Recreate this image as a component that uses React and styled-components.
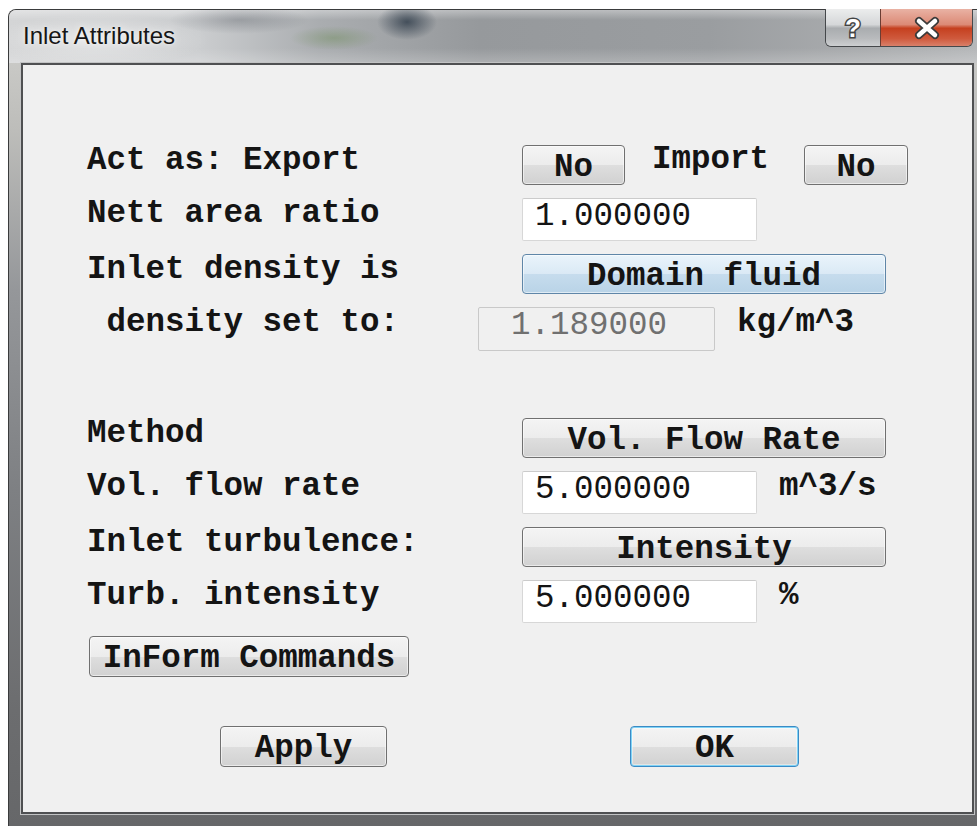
import styled, { createGlobalStyle } from "styled-components";

const GlobalStyle = createGlobalStyle`
  html, body {
    margin: 0;
    padding: 0;
    background: #fff;
    overflow: hidden;
  }
  body {
    font-family: "Liberation Mono", "Courier New", monospace;
  }
`;

const Page = styled.div`
  width: 977px;
  height: 826px;
  box-sizing: border-box;
  padding: 9px 0 0 8px;
  overflow: hidden;
`;

const Window = styled.div`
  width: 979px;
  height: 817px;
  box-sizing: border-box;
  display: flex;
  flex-direction: column;
  border: 1px solid #3a3b3c;
  border-bottom: none;
  border-radius: 8px 8px 0 0;
  padding: 0 12px 12px;
  background: linear-gradient(
    to bottom,
    #d2d2cf 0,
    #bdbdba 120px,
    #95979a 280px,
    #7e8083 480px,
    #6c6d6f 700px,
    #666769 100%
  );
`;

const TitleBar = styled.div`
  flex-shrink: 0;
  height: 53px;
  margin: 0 -12px;
  padding: 0 13px 0 14px;
  display: flex;
  align-items: flex-start;
  border-radius: 7px 7px 0 0;
  background:
    radial-gradient(30px 18px at 398px 12px, rgba(45, 58, 72, 0.8), rgba(45, 58, 72, 0)),
    radial-gradient(44px 12px at 325px 28px, rgba(110, 140, 90, 0.45), rgba(110, 140, 90, 0)),
    radial-gradient(70px 14px at 230px 10px, rgba(85, 90, 98, 0.35), rgba(85, 90, 98, 0)),
    radial-gradient(110px 26px at 90px 30px, rgba(255, 255, 255, 0.45), rgba(255, 255, 255, 0)),
    linear-gradient(
      to bottom,
      rgba(255, 255, 255, 0.35) 0,
      rgba(255, 255, 255, 0) 10px,
      rgba(255, 255, 255, 0) 38px,
      rgba(255, 255, 255, 0.22) 100%
    ),
    linear-gradient(
      to right,
      #d4d5d6 0,
      #cbcdcf 190px,
      #aaadb0 310px,
      #96999c 470px,
      #9a9da0 700px,
      #aeb0b2 900px,
      #b6b8ba 100%
    );
`;

const Title = styled.div`
  padding-top: 12px;
  font-family: "Liberation Sans", Arial, sans-serif;
  font-size: 24px;
  line-height: 27px;
  color: #161616;
  text-shadow: 0 0 8px rgba(255, 255, 255, 0.8), 0 0 3px rgba(255, 255, 255, 0.6);
`;

const CaptionButtons = styled.div`
  margin-left: auto;
  margin-top: -1px;
  height: 37px;
  display: flex;
  border: 1px solid #45484b;
  border-top: none;
  border-radius: 0 0 6px 6px;
  overflow: hidden;
`;

const CaptionButton = styled.div`
  width: ${(p) => (p.$close ? "91px" : "54px")};
  display: flex;
  align-items: center;
  justify-content: center;
  border-left: ${(p) => (p.$close ? "1px solid #6b3d33" : "none")};
  background: ${(p) =>
    p.$close
      ? "linear-gradient(to bottom, #e9b2a4 0%, #dc8a76 42%, #c5401f 52%, #cf5a3d 80%, #d9806a 100%)"
      : "linear-gradient(to bottom, #eceded 0%, #d5d7d9 42%, #a9acaf 52%, #b9bbbd 80%, #cdcfd1 100%)"};
`;

const Client = styled.div`
  height: 751px;
  box-sizing: border-box;
  border: 2px solid #4f5052;
  box-shadow: 0 0 0 1px #c2c3c4;
  background: #f0f0f0;
  padding: 80px 0 0 64px;
`;

const Form = styled.div`
  display: grid;
  grid-template-columns: 435px auto;
  row-gap: 13px;
  align-items: start;
`;

const Label = styled.div`
  font-weight: bold;
  font-size: 32.5px;
  line-height: 32px;
  color: #141414;
  white-space: pre;
`;

const ImportLabel = styled(Label)`
  margin: -1px 35px 0 27px;
`;

const Unit = styled(Label)`
  margin-left: 22px;
`;

const Cell = styled.div`
  display: flex;
  align-items: flex-start;
`;

const Spacer = styled.div`
  grid-column: 1 / span 2;
  height: 41px;
`;

const Button = styled.button`
  width: ${(p) => p.$w}px;
  height: ${(p) => p.$h || 40}px;
  margin-left: ${(p) => p.$ml || 0}px;
  box-sizing: border-box;
  padding: 3px 0 0;
  font-family: "Liberation Mono", "Courier New", monospace;
  font-weight: bold;
  font-size: 32.5px;
  color: #141414;
  white-space: pre;
  border: 1px solid ${(p) => (p.$blue ? "#5f86a8" : "#707070")};
  border-radius: 4px;
  box-shadow: inset 0 0 0 1px rgba(255, 255, 255, 0.55);
  background: ${(p) =>
    p.$blue
      ? "linear-gradient(to bottom, #eaf4fb 0%, #dae9f5 50%, #c6dced 51%, #b9d3e7 100%)"
      : "linear-gradient(to bottom, #f4f4f4 0%, #ececec 50%, #dedede 51%, #d1d1d1 100%)"};
`;

const DefaultButton = styled(Button)`
  border-color: #3b8ac4;
  box-shadow: inset 0 0 0 1px #7fd3f6, inset 0 0 0 2px rgba(255, 255, 255, 0.4);
`;

const Field = styled.div`
  width: 235px;
  height: 43px;
  box-sizing: border-box;
  padding: 0 12px;
  border: 1px solid #d7d7d7;
  border-top-color: #cbcbcb;
  border-radius: 2px;
  background: #fff;
  font-size: 32.5px;
  line-height: 36px;
  color: #141414;
`;

const DisabledField = styled(Field)`
  width: 237px;
  height: 44px;
  margin-left: -44px;
  padding-left: 32px;
  background: #f0f0f0;
  border-color: #c9c9c9;
  color: #707070;
`;

const BottomBar = styled.div`
  display: flex;
  gap: 243px;
  margin: 49px 0 0 133px;
`;

const CloseGlyph = () => (
  <svg width="30" height="24" viewBox="0 0 30 24">
    <path d="M7 5 L23 19 M23 5 L7 19" stroke="#3b3b3b" strokeWidth="8" strokeLinecap="round" fill="none" />
    <path d="M7 5 L23 19 M23 5 L7 19" stroke="#fff" strokeWidth="4.5" strokeLinecap="round" fill="none" />
  </svg>
);

const HelpGlyph = () => (
  <svg width="22" height="28" viewBox="0 0 22 28">
    <text
      x="11"
      y="23"
      textAnchor="middle"
      fontFamily="Liberation Sans, Arial, sans-serif"
      fontWeight="bold"
      fontSize="26"
      fill="#fff"
      stroke="#444"
      strokeWidth="3"
      paintOrder="stroke"
    >
      ?
    </text>
  </svg>
);

export default function App() {
  return (
    <Page>
      <GlobalStyle />
      <Window>
        <TitleBar>
          <Title>Inlet Attributes</Title>
          <CaptionButtons>
            <CaptionButton>
              <HelpGlyph />
            </CaptionButton>
            <CaptionButton $close>
              <CloseGlyph />
            </CaptionButton>
          </CaptionButtons>
        </TitleBar>

        <Client>
          <Form>
            <Label>Act as: Export</Label>
            <Cell>
              <Button $w={103}>No</Button>
              <ImportLabel>Import</ImportLabel>
              <Button $w={104}>No</Button>
            </Cell>

            <Label>Nett area ratio</Label>
            <Cell>
              <Field>1.000000</Field>
            </Cell>

            <Label>Inlet density is</Label>
            <Cell>
              <Button $w={364} $blue>Domain fluid</Button>
            </Cell>

            <Label> density set to:</Label>
            <Cell>
              <DisabledField>1.189000</DisabledField>
              <Unit>kg/m^3</Unit>
            </Cell>

            <Spacer />

            <Label>Method</Label>
            <Cell>
              <Button $w={364}>Vol. Flow Rate</Button>
            </Cell>

            <Label>Vol. flow rate</Label>
            <Cell>
              <Field>5.000000</Field>
              <Unit>m^3/s</Unit>
            </Cell>

            <Label>Inlet turbulence:</Label>
            <Cell>
              <Button $w={364}>Intensity</Button>
            </Cell>

            <Label>Turb. intensity</Label>
            <Cell>
              <Field>5.000000</Field>
              <Unit>%</Unit>
            </Cell>

            <Cell>
              <Button $w={320} $h={41} $ml={2}>InForm Commands</Button>
            </Cell>
          </Form>

          <BottomBar>
            <Button $w={167} $h={41}>Apply</Button>
            <DefaultButton $w={169} $h={41}>OK</DefaultButton>
          </BottomBar>
        </Client>
      </Window>
    </Page>
  );
}
